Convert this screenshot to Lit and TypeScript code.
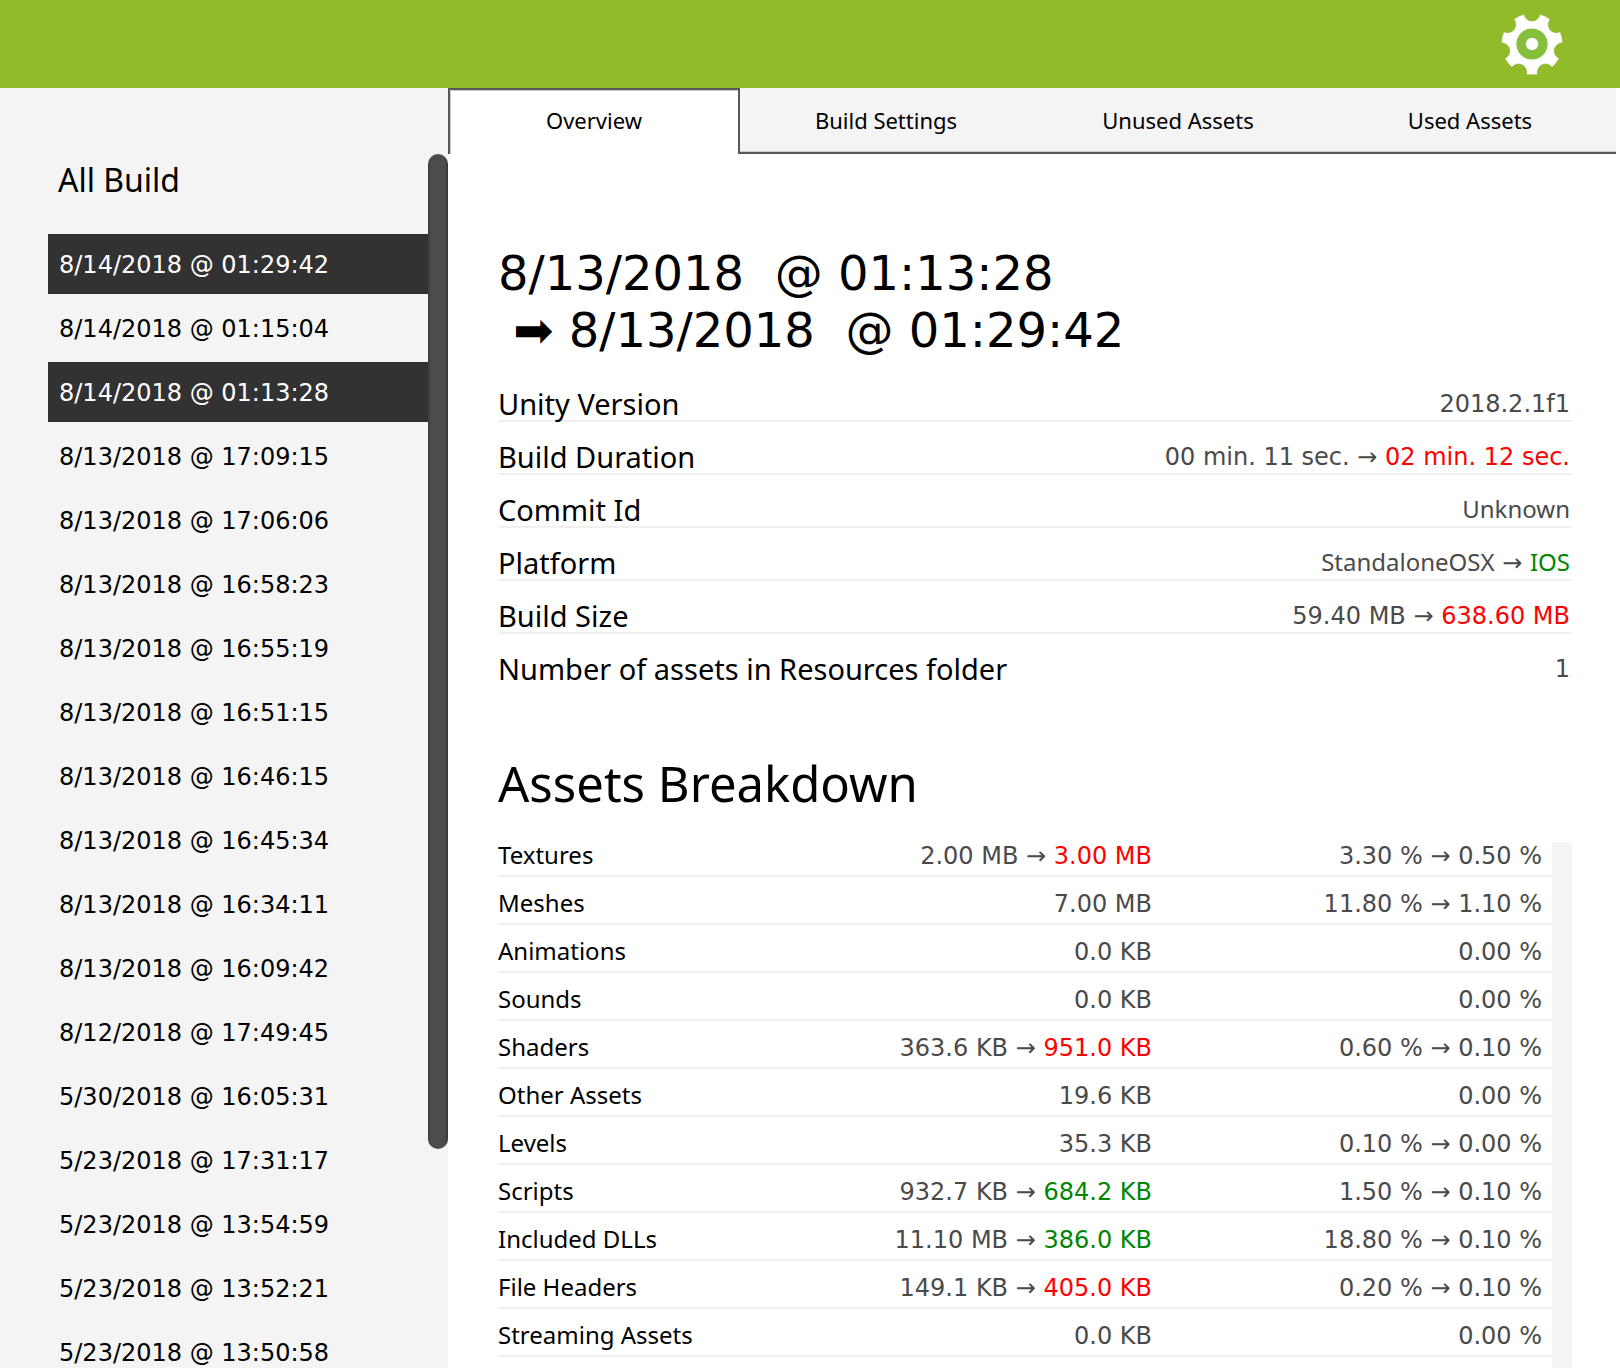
import { LitElement, html, css, svg } from "lit";
import { customElement, property, state } from "lit/decorators.js";
import { classMap } from "lit/directives/class-map.js";

type Trend = "worse" | "better" | "same";

interface Change {
  from: string;
  to?: string;
  trend?: Trend;
}

interface InfoRow {
  label: string;
  value: Change;
}

interface AssetRow {
  name: string;
  size: Change;
  share: Change;
}

const TABS = ["Overview", "Build Settings", "Unused Assets", "Used Assets"];

const BUILDS = [
  "8/14/2018 @ 01:29:42",
  "8/14/2018 @ 01:15:04",
  "8/14/2018 @ 01:13:28",
  "8/13/2018 @ 17:09:15",
  "8/13/2018 @ 17:06:06",
  "8/13/2018 @ 16:58:23",
  "8/13/2018 @ 16:55:19",
  "8/13/2018 @ 16:51:15",
  "8/13/2018 @ 16:46:15",
  "8/13/2018 @ 16:45:34",
  "8/13/2018 @ 16:34:11",
  "8/13/2018 @ 16:09:42",
  "8/12/2018 @ 17:49:45",
  "5/30/2018 @ 16:05:31",
  "5/23/2018 @ 17:31:17",
  "5/23/2018 @ 13:54:59",
  "5/23/2018 @ 13:52:21",
  "5/23/2018 @ 13:50:58",
];

const INFO: InfoRow[] = [
  { label: "Unity Version", value: { from: "2018.2.1f1" } },
  { label: "Build Duration", value: { from: "00 min. 11 sec.", to: "02 min. 12 sec.", trend: "worse" } },
  { label: "Commit Id", value: { from: "Unknown" } },
  { label: "Platform", value: { from: "StandaloneOSX", to: "IOS", trend: "better" } },
  { label: "Build Size", value: { from: "59.40 MB", to: "638.60 MB", trend: "worse" } },
  { label: "Number of assets in Resources folder", value: { from: "1" } },
];

const ASSETS: AssetRow[] = [
  { name: "Textures", size: { from: "2.00 MB", to: "3.00 MB", trend: "worse" }, share: { from: "3.30 %", to: "0.50 %" } },
  { name: "Meshes", size: { from: "7.00 MB" }, share: { from: "11.80 %", to: "1.10 %" } },
  { name: "Animations", size: { from: "0.0 KB" }, share: { from: "0.00 %" } },
  { name: "Sounds", size: { from: "0.0 KB" }, share: { from: "0.00 %" } },
  { name: "Shaders", size: { from: "363.6 KB", to: "951.0 KB", trend: "worse" }, share: { from: "0.60 %", to: "0.10 %" } },
  { name: "Other Assets", size: { from: "19.6 KB" }, share: { from: "0.00 %" } },
  { name: "Levels", size: { from: "35.3 KB" }, share: { from: "0.10 %", to: "0.00 %" } },
  { name: "Scripts", size: { from: "932.7 KB", to: "684.2 KB", trend: "better" }, share: { from: "1.50 %", to: "0.10 %" } },
  { name: "Included DLLs", size: { from: "11.10 MB", to: "386.0 KB", trend: "better" }, share: { from: "18.80 %", to: "0.10 %" } },
  { name: "File Headers", size: { from: "149.1 KB", to: "405.0 KB", trend: "worse" }, share: { from: "0.20 %", to: "0.10 %" } },
  { name: "Streaming Assets", size: { from: "0.0 KB" }, share: { from: "0.00 %" } },
];

/* Outline of a cog: arcs along the rim joined by round notches. */
function cogPath(teeth: number, rim: number, notch: number, halfNotch: number): string {
  const at = (deg: number) => {
    const a = ((deg - 90) * Math.PI) / 180;
    return `${(rim * Math.cos(a)).toFixed(2)} ${(rim * Math.sin(a)).toFixed(2)}`;
  };
  const step = 360 / teeth;
  let d = `M${at(-halfNotch)}`;
  for (let i = 0; i < teeth; i++) {
    d += `A${notch} ${notch} 0 0 0 ${at(i * step + halfNotch)}`;
    d += `A${rim} ${rim} 0 0 1 ${at((i + 1) * step - halfNotch)}`;
  }
  return d + "Z";
}

@customElement("cog-icon")
export class CogIcon extends LitElement {
  static styles = css`
    :host { display: block; }
    svg { display: block; width: 62px; height: 62px; }
    .body { fill: #fff; stroke: #7ba122; stroke-width: 0.4; }
    .ring { fill: #86bf3c; }
    .hub { fill: #fff; }
  `;
  render() {
    return html`<svg viewBox="-31 -31 62 62" aria-hidden="true">
      ${svg`<path class="body" d=${cogPath(7, 30.7, 8.2, 15.2)}></path>
      <circle class="ring" r="15.6"></circle>
      <circle class="hub" r="6.2"></circle>`}
    </svg>`;
  }
}

@customElement("change-value")
export class ChangeValue extends LitElement {
  @property({ attribute: false }) value: Change = { from: "" };

  static styles = css`
    :host { display: block; color: #4a4a4a; white-space: pre; }
    .words { font-family: "Noto Sans", "Open Sans", sans-serif; }
    .figures, .arrow { font-family: "DejaVu Sans", sans-serif; }
    .worse { color: #ff0000; }
    .better { color: #008600; }
  `;

  render() {
    const { from, to, trend = "same" } = this.value;
    const numeric = /\d/.test(from);
    return html`<span class=${numeric ? "figures" : "words"}>${from}${to
      ? html`<span class="arrow"> → </span><span class=${trend}>${to}</span>`
      : ""}</span>`;
  }
}

@customElement("app-root")
export class AppRoot extends LitElement {
  @state() private tab = 0;
  @state() private compared = [0, 2];

  static styles = css`
    :host {
      display: flex;
      flex-direction: column;
      height: 100vh;
      overflow: hidden;
      background: #fff;
      color: #000;
      font: 24px/32px "Noto Sans", "Open Sans", sans-serif;
    }
    * { box-sizing: border-box; }
    h1, h2, h3, dl, dd, ul { margin: 0; padding: 0; font-weight: 400; }
    button {
      margin: 0;
      padding: 0;
      border: 0;
      background: none;
      color: inherit;
      font: inherit;
      cursor: pointer;
    }
    .top {
      flex: none;
      display: flex;
      justify-content: flex-end;
      align-items: center;
      height: 88px;
      padding: 0 57px;
      background: #91bb29;
    }
    .page { flex: 1; min-height: 0; display: flex; }

    .side {
      flex: none;
      width: 448px;
      display: flex;
      padding-top: 66px;
      background: #f4f4f4;
    }
    .builds {
      flex: 1;
      padding: 6px 0 0 48px;
      overflow-y: auto;
      scrollbar-width: none;
    }
    .builds-title {
      margin: 0 0 34px 10px;
      font-size: 32px;
      line-height: 40px;
    }
    .list { display: flex; flex-direction: column; gap: 4px; list-style: none; }
    .build {
      display: block;
      width: 100%;
      padding: 2px 0 0 11px;
      font: 24px/58px "DejaVu Sans", sans-serif;
      text-align: left;
    }
    .build.picked { background: #323232; color: #fff; }
    .side-track { flex: none; width: 20px; }
    .side-thumb {
      height: 82%;
      border-radius: 10px;
      background: linear-gradient(90deg, #3c3c3c, #4c4c4c 15%, #4c4c4c 85%, #363636);
    }

    .main { flex: 1; min-width: 0; display: flex; flex-direction: column; }
    .tabs {
      flex: none;
      display: grid;
      grid-template-columns: repeat(4, minmax(0, 1fr));
      margin-right: 4px;
      background: #f4f4f4;
    }
    .tab {
      height: 66px;
      border-bottom: 2px solid #58585a;
      box-shadow: inset 0 -1px #cfcccd;
      font-size: 22px;
    }
    .tab.active {
      padding-bottom: 4px;
      border: 2px solid #58585a;
      border-bottom: 0;
      box-shadow: inset 1px 1px #cfcccd;
      background: #fff;
    }
    .report {
      flex: 1;
      min-height: 0;
      display: flex;
      flex-direction: column;
      padding: 91px 48px 0 50px;
    }
    .title {
      font: 48px/57px "DejaVu Sans", sans-serif;
      white-space: pre-wrap;
    }
    .info { margin-top: 10px; }
    .info-row {
      display: flex;
      justify-content: space-between;
      align-items: flex-start;
      padding-top: 19px;
      border-bottom: 2px solid #f0f0f0;
    }
    .info-row:last-child { border-bottom-color: transparent; }
    .info-row dt { font-size: 29px; }
    .info-row dd { padding-right: 2px; line-height: 30px; }
    .section { margin: 68px 0 31px; font-size: 49px; line-height: 56px; }

    .breakdown {
      flex: 1;
      min-height: 0;
      display: flex;
      align-items: stretch;
    }
    .scroll {
      flex: 1;
      margin-top: -6px;
      padding-top: 6px;
      overflow-y: auto;
      scrollbar-width: none;
    }
    .table-track { flex: none; width: 20px; background: #f4f4f4; }
    table { width: 100%; border-collapse: separate; border-spacing: 0; table-layout: fixed; }
    .name-col { width: 25%; }
    .size-col { width: 38%; }
    .share-col { width: 37%; }
    th, td {
      padding: 13px 10px 6px 0;
      border-bottom: 2px solid #f0f0f0;
      font-weight: 400;
      line-height: 26px;
      text-align: right;
      vertical-align: baseline;
      white-space: nowrap;
    }
    th { text-align: left; }
    tr:first-child th, tr:first-child td { padding-top: 0; }
  `;

  private toggle(i: number) {
    this.compared = this.compared.includes(i)
      ? this.compared.filter((n) => n !== i)
      : [...this.compared, i].slice(-2);
  }

  render() {
    return html`
      <header class="top">
        <button type="button" aria-label="Settings"><cog-icon></cog-icon></button>
      </header>
      <div class="page">
        <aside class="side">
          <div class="builds">
            <h3 class="builds-title">All Build</h3>
            <ul class="list">
              ${BUILDS.map(
                (b, i) => html`<li>
                  <button
                    type="button"
                    class=${classMap({ build: true, picked: this.compared.includes(i) })}
                    aria-pressed=${this.compared.includes(i)}
                    @click=${() => this.toggle(i)}
                  >${b}</button>
                </li>`,
              )}
            </ul>
          </div>
          <div class="side-track"><div class="side-thumb"></div></div>
        </aside>
        <main class="main">
          <nav class="tabs" role="tablist">
            ${TABS.map(
              (t, i) => html`<button
                type="button"
                role="tab"
                class=${classMap({ tab: true, active: this.tab === i })}
                aria-selected=${this.tab === i}
                @click=${() => (this.tab = i)}
              >${t}</button>`,
            )}
          </nav>
          <section class="report">
            <h1 class="title">${"8/13/2018  @ 01:13:28\n ➡ 8/13/2018  @ 01:29:42"}</h1>
            <dl class="info">
              ${INFO.map(
                (r) => html`<div class="info-row">
                  <dt>${r.label}</dt>
                  <dd><change-value .value=${r.value}></change-value></dd>
                </div>`,
              )}
            </dl>
            <h2 class="section">Assets Breakdown</h2>
            <div class="breakdown">
              <div class="scroll">
                <table>
                  <colgroup>
                    <col class="name-col" />
                    <col class="size-col" />
                    <col class="share-col" />
                  </colgroup>
                  <tbody>
                    ${ASSETS.map(
                      (a) => html`<tr>
                        <th scope="row">${a.name}</th>
                        <td><change-value .value=${a.size}></change-value></td>
                        <td><change-value .value=${a.share}></change-value></td>
                      </tr>`,
                    )}
                  </tbody>
                </table>
              </div>
              <div class="table-track"></div>
            </div>
          </section>
        </main>
      </div>
    `;
  }
}
